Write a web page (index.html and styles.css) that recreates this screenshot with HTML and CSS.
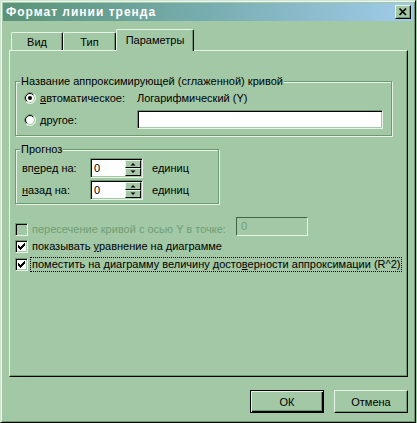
FILE: index.html
```html
<!DOCTYPE html>
<html lang="ru">
<head>
  <meta charset="UTF-8" />
  <title>Формат линии тренда</title>
  <link rel="stylesheet" href="styles.css">
</head>
<body>

  <div class="window">
    <!-- Title bar -->
    <div class="titlebar">
      <span class="title">Формат линии тренда</span>
      <button class="close">
        <svg width="14" height="12" viewBox="0 0 14 12"><path d="M3.5 2.5 L10 9 M10 2.5 L3.5 9" stroke="#000" stroke-width="1.7" fill="none"/></svg>
      </button>
    </div>

    <!-- Tabs -->
    <div class="tabs">
      <div class="tab">Вид</div>
      <div class="tab tab-2">Тип</div>
      <div class="tab active">Параметры</div>
    </div>

    <div class="panel">
      <div class="group group-name">
        <div class="group-title">Название аппроксимирующей (сглаженной) кривой</div>
        <div class="radio-row">
          <label class="radio-label">
            <svg class="radio" width="12" height="12" viewBox="0 0 12 12">
              <circle cx="6" cy="6" r="5.5" fill="#fff" stroke="#e6f3e6"/>
              <path d="M2.1 9.9 A5.5 5.5 0 0 1 9.9 2.1" fill="none" stroke="#6b9a71"/>
              <circle cx="6" cy="6" r="4.5" fill="none" stroke="#a3c8a6"/>
              <path d="M2.8 9.2 A4.5 4.5 0 0 1 9.2 2.8" fill="none" stroke="#000"/>
              <circle cx="6" cy="6" r="2" fill="#000"/>
            </svg>
            <span><u>а</u>втоматическое:</span>
          </label>
          <span>Логарифмический (Y)</span>
        </div>
        <div class="radio-row">
          <label class="radio-label">
            <svg class="radio" width="12" height="12" viewBox="0 0 12 12">
              <circle cx="6" cy="6" r="5.5" fill="#fff" stroke="#e6f3e6"/>
              <path d="M2.1 9.9 A5.5 5.5 0 0 1 9.9 2.1" fill="none" stroke="#6b9a71"/>
              <circle cx="6" cy="6" r="4.5" fill="none" stroke="#a3c8a6"/>
              <path d="M2.8 9.2 A4.5 4.5 0 0 1 9.2 2.8" fill="none" stroke="#000"/>
            </svg>
            <span><u>д</u>ругое:</span>
          </label>
          <span class="textbox"></span>
        </div>
      </div>

      <div class="group group-forecast">
        <div class="group-title">Прогноз</div>
        <div class="spin-row first">
          <span class="spin-label">вп<u>е</u>ред на:</span>
          <span class="spin">
            <span class="spin-value">0</span>
            <span class="spin-buttons">
              <span class="spin-btn"><svg width="14" height="6" viewBox="0 0 14 6"><path d="M4.5 4.5 h5 l-2.5 -2.5 z" fill="#000"/></svg></span>
              <span class="spin-btn"><svg width="14" height="6" viewBox="0 0 14 6"><path d="M4.5 1.5 h5 l-2.5 2.5 z" fill="#000"/></svg></span>
            </span>
          </span>
          <span class="unit">единиц</span>
        </div>
        <div class="spin-row">
          <span class="spin-label"><u>н</u>азад на:</span>
          <span class="spin">
            <span class="spin-value">0</span>
            <span class="spin-buttons">
              <span class="spin-btn"><svg width="14" height="6" viewBox="0 0 14 6"><path d="M4.5 4.5 h5 l-2.5 -2.5 z" fill="#000"/></svg></span>
              <span class="spin-btn"><svg width="14" height="6" viewBox="0 0 14 6"><path d="M4.5 1.5 h5 l-2.5 2.5 z" fill="#000"/></svg></span>
            </span>
          </span>
          <span class="unit">единиц</span>
        </div>
      </div>

      <!-- Checkboxes -->
      <div class="check-row intercept">
        <span class="check disabled"></span>
        <span class="check-text disabled-text">пересечение кривой с осью Y в точке:</span>
        <span class="textbox disabled-box">0</span>
      </div>
      <div class="check-row second">
        <span class="check">
          <svg width="11" height="11" viewBox="0 0 11 11"><path d="M2.5 4v3M3.5 5v3M4.5 6v3M5.5 5v3M6.5 4v3M7.5 3v3M8.5 2v3" stroke="#000"/></svg>
        </span>
        <span class="check-text">показывать <u>у</u>равнение на диаграмме</span>
      </div>
      <div class="check-row third">
        <span class="check">
          <svg width="11" height="11" viewBox="0 0 11 11"><path d="M2.5 4v3M3.5 5v3M4.5 6v3M5.5 5v3M6.5 4v3M7.5 3v3M8.5 2v3" stroke="#000"/></svg>
        </span>
        <span class="check-text focused">поместить на диаграмму величину досто<u>в</u>ерности аппроксимации (R^2)</span>
      </div>
    </div>

    <!-- Footer buttons -->
    <div class="buttons">
      <button class="btn default">ОК</button>
      <button class="btn">Отмена</button>
    </div>
  </div>

</body>
</html>
```

FILE: styles.css
```css
* {
  box-sizing: border-box;
}

body {
  margin: 0;
  background: #a3c8a6;
  font-family: "Liberation Sans", Arial, sans-serif;
  font-size: 11px;
  color: #000;
}

u {
  text-underline-offset: 1px;
}

.window {
  width: 416px;
  height: 423px;
  padding: 2px;
  background: #a3c8a6;
  border: 1px solid;
  border-color: #cfe5d1 #000 #000 #cfe5d1;
  box-shadow: inset 1px 1px #eef7ee, inset -1px -1px #6b9a71;
}

/* Title bar */
.titlebar {
  height: 18px;
  display: flex;
  align-items: center;
  justify-content: space-between;
  padding: 0 2px 0 3px;
  background: linear-gradient(to right, #5a9377, #78adb0 50%, #a0cbea);
}

.title {
  color: #fff;
  font-weight: bold;
  font-size: 12px;
  letter-spacing: 1px;
}

.close {
  width: 16px;
  height: 14px;
  padding: 0;
  display: flex;
  background: #a3c8a6;
  border: 1px solid;
  border-color: #e6f3e6 #000 #000 #e6f3e6;
  box-shadow: inset -1px -1px #6b9a71;
}

/* Tabs */
.tabs {
  display: flex;
  align-items: flex-end;
  height: 21px;
  margin-top: 8px;
  padding-left: 8px;
}

.tab {
  width: 52px;
  height: 18px;
  padding-top: 1px;
  line-height: 17px;
  text-align: center;
  background: #a3c8a6;
  border-top: 1px solid #e6f3e6;
  border-left: 1px solid #e6f3e6;
  border-right: 1px solid #000;
  border-radius: 2px 2px 0 0;
  box-shadow: inset -1px 0 #6b9a71;
}

.tab-2 {
  width: 53px;
}

.tab.active {
  width: 78px;
  height: 22px;
  padding-top: 2px;
  margin-bottom: -1px;
  position: relative;
  z-index: 1;
}

/* Panel */
.panel {
  width: 399px;
  height: 327px;
  margin-left: 6px;
  padding: 30px 0 0 5px;
  border: 1px solid;
  border-color: #e6f3e6 #000 #000 #e6f3e6;
  box-shadow: inset -1px -1px #6b9a71;
}

.group {
  border: 1px solid #6b9a71;
  box-shadow: inset 1px 1px #e6f3e6, 1px 1px #e6f3e6;
}

.group-title {
  width: fit-content;
  margin: -7px 0 0 4px;
  padding: 0 1px;
  line-height: 13px;
  background: #a3c8a6;
}

.group-name {
  width: 377px;
  padding-bottom: 6px;
}

.radio-row {
  display: flex;
  align-items: center;
  height: 19px;
  padding-left: 8px;
}

.radio-row + .radio-row {
  margin-top: 3px;
}

.radio-label {
  flex: 0 0 113px;
  display: flex;
  align-items: center;
  gap: 4px;
}

.textbox {
  width: 246px;
  height: 19px;
  background: #fff;
  border: 1px solid;
  border-color: #6b9a71 #e6f3e6 #e6f3e6 #6b9a71;
  box-shadow: inset 1px 1px #000, inset -1px -1px #a3c8a6;
}

.group-forecast {
  width: 204px;
  margin-top: 13px;
  padding-bottom: 3px;
}

.spin-row {
  display: flex;
  align-items: center;
  height: 20px;
  margin-top: 2px;
  padding-left: 6px;
}

.spin-label {
  flex: 0 0 68px;
}

.spin {
  display: flex;
  width: 53px;
  height: 20px;
  padding: 1px;
  background: #fff;
  border: 1px solid;
  border-color: #6b9a71 #e6f3e6 #e6f3e6 #6b9a71;
  box-shadow: inset 1px 1px #000, inset -1px -1px #a3c8a6;
}

.spin-value {
  flex: 1;
  padding: 1px 0 0 2px;
  line-height: 15px;
}

.spin-buttons {
  display: flex;
  flex-direction: column;
  width: 16px;
}

.spin-btn {
  display: flex;
  height: 8px;
  background: #a3c8a6;
  border: 1px solid;
  border-color: #e6f3e6 #000 #000 #e6f3e6;
}

.unit {
  margin-left: 9px;
}

/* Checkboxes */
.check-row {
  display: flex;
  align-items: flex-end;
}

.check {
  flex: none;
  width: 13px;
  height: 13px;
  margin-right: 4px;
  display: flex;
  background: #fff;
  border: 1px solid;
  border-color: #6b9a71 #e6f3e6 #e6f3e6 #6b9a71;
  box-shadow: inset 1px 1px #000, inset -1px -1px #a3c8a6;
}

.check.disabled {
  background: #a3c8a6;
}

.check-text {
  line-height: 13px;
}

.intercept {
  height: 19px;
  margin-top: 13px;
}

.intercept .check-text {
  flex: 0 0 204px;
}

.disabled-text {
  color: #6f9f76;
}

.disabled-box {
  width: 72px;
  padding: 2px 0 0 4px;
  line-height: 13px;
  color: #6f9f76;
  background: #a3c8a6;
  border-color: #3f6545 #e6f3e6 #e6f3e6 #3f6545;
  box-shadow: none;
}

.second {
  height: 13px;
  margin-top: 4px;
}

.third {
  height: 13px;
  margin-top: 5px;
  align-items: center;
}

.third .check {
  margin-right: 2px;
}

.focused {
  padding: 0 1px;
  border: 1px dotted #000;
}

/* Footer buttons */
.buttons {
  display: flex;
  justify-content: flex-end;
  gap: 10px;
  margin-top: 13px;
  padding-right: 5px;
}

.btn {
  width: 74px;
  height: 23px;
  padding: 0;
  font-family: inherit;
  font-size: 11px;
  color: #000;
  background: #a3c8a6;
  border: 1px solid;
  border-color: #e6f3e6 #000 #000 #e6f3e6;
  box-shadow: inset -1px -1px #6b9a71;
}

.btn.default {
  border-color: #000;
  box-shadow: inset 1px 1px #e6f3e6, inset -1px -1px #000, inset -2px -2px #6b9a71;
}
```
